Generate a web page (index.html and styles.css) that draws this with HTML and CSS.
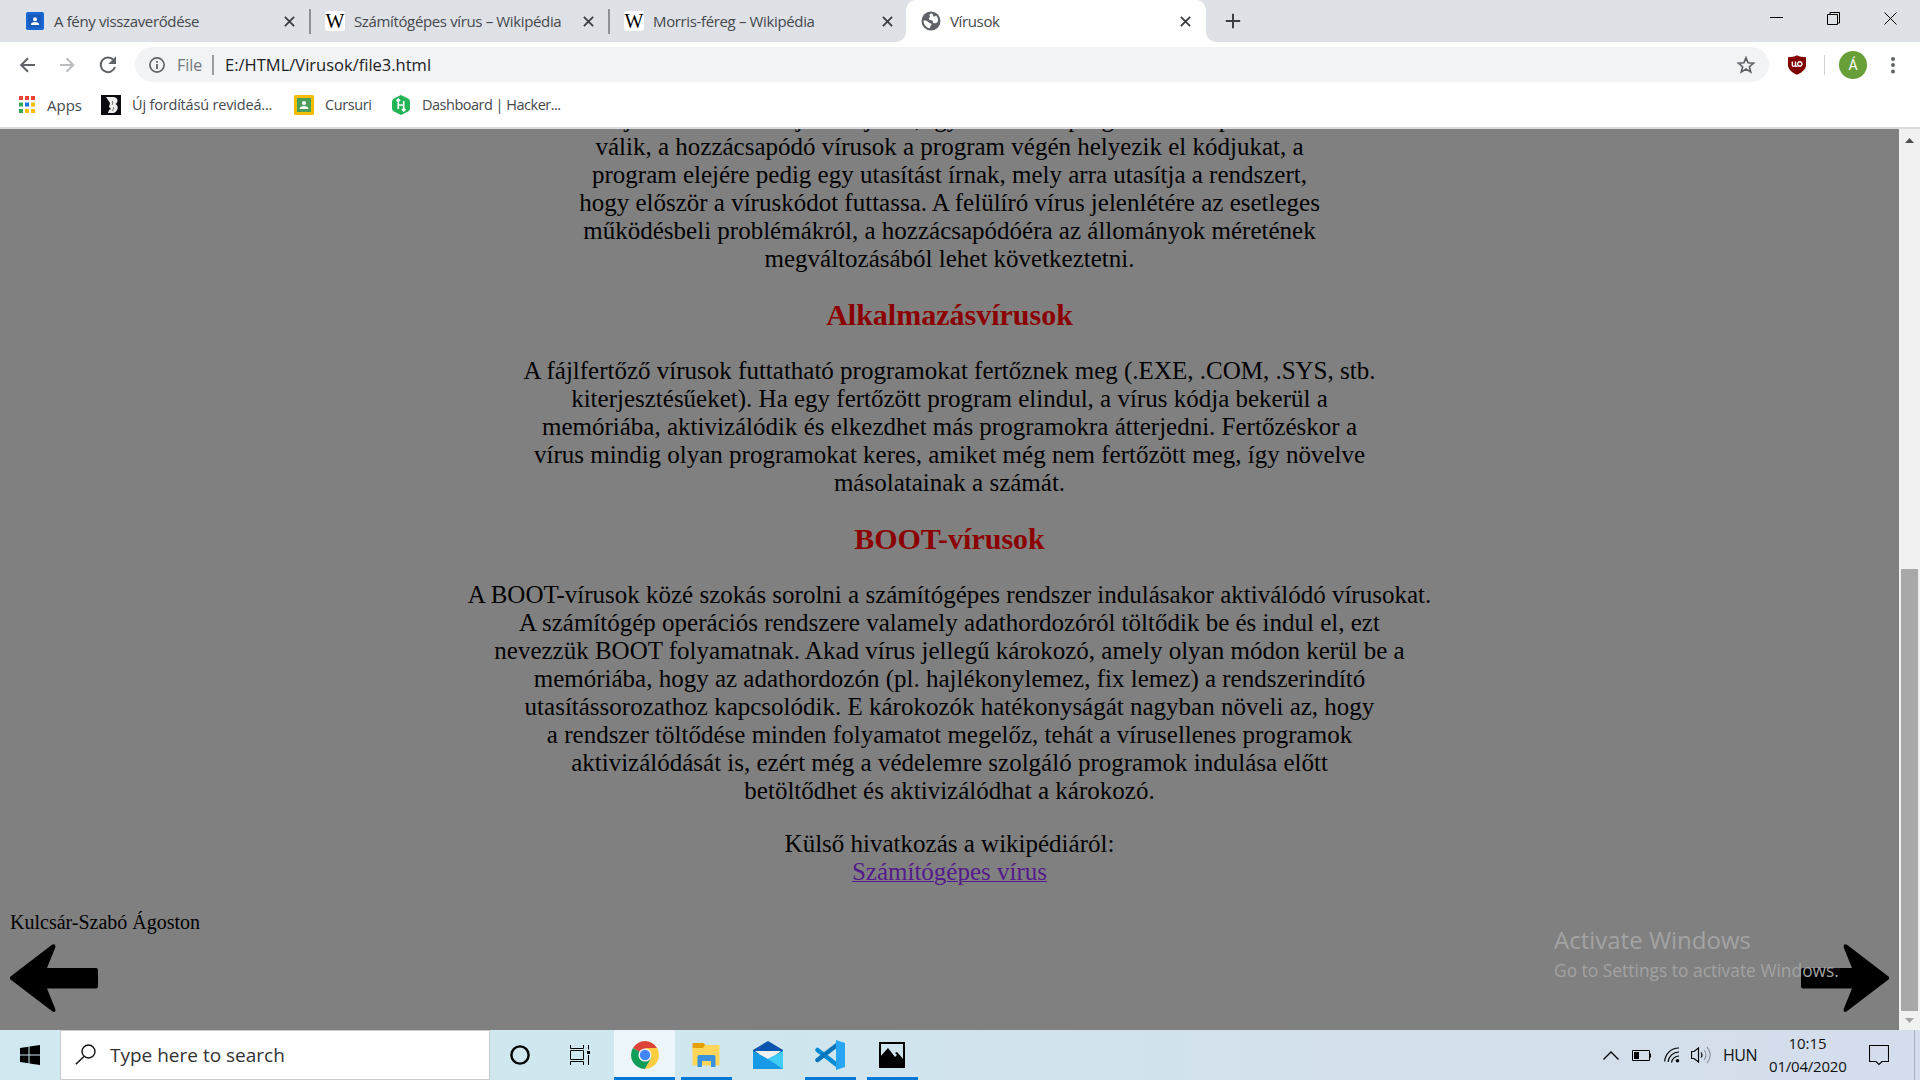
FILE: index.html
```html
<!DOCTYPE html>
<html lang="hu">
<head>
<meta charset="utf-8">
<title>Vírusok</title>
<link rel="stylesheet" href="styles.css">
</head>
<body>
<div class="screen">
  <header class="tabstrip">
    <div class="tab tab-first">
      <svg class="fav" viewBox="0 0 20 20"><rect width="20" height="20" rx="2" fill="#1967d2"/><rect x="3" y="3" width="14" height="14" fill="#185abc"/><circle cx="10" cy="8" r="2.2" fill="#fff"/><path d="M5.500 14.500v-1c0-1.600 2.500-2.500 4.500-2.500s4.500.9 4.500 2.500v1z" fill="#fff"/></svg>
      <span class="tab-title">A fény visszaverődése</span>
      <svg class="close" viewBox="0 0 10 10"><path d="M.8.8l8.400 8.400M9.200.8L.8 9.200"/></svg>
    </div>
    <div class="tab">
      <span class="fav wiki">W</span>
      <span class="tab-title">Számítógépes vírus – Wikipédia</span>
      <svg class="close" viewBox="0 0 10 10"><path d="M.8.8l8.400 8.400M9.200.8L.8 9.200"/></svg>
    </div>
    <div class="tab tab-third">
      <span class="fav wiki">W</span>
      <span class="tab-title">Morris-féreg – Wikipédia</span>
      <svg class="close" viewBox="0 0 10 10"><path d="M.8.8l8.400 8.400M9.200.8L.8 9.200"/></svg>
    </div>
    <div class="tab active">
      <svg class="fav globe" viewBox="0 0 20 20"><circle cx="10" cy="10" r="9.500" fill="#5f6368"/><path d="M11 2.500c-2.500 0-3 1.500-2.300 2.500 1 1.300-1.200 1.700-.8 3 .3 1.200 2.300.8 3.300 1.500 1.300 1 .2 2.500 1.800 2.800 1.800.3 3.500-.3 4-2.300.2-3-1-4.300-2-5.500-.8 1-2 1.600-2.500.8S12.300 3.700 11 2.500zM2.500 9.500c2 0 4 .4 5 1.800s2.500.5 3 1.700c.4 1.300-1.500 1.500-1.500 4.300-3.500-.3-6.500-3.800-6.500-7.800z" fill="#fff"/></svg>
      <span class="tab-title">Vírusok</span>
      <svg class="close" viewBox="0 0 10 10"><path d="M.8.8l8.400 8.400M9.200.8L.8 9.200"/></svg>
    </div>
    <svg class="newtab" viewBox="0 0 16 16"><path d="M8 .8v14.400M.8 8h14.400" stroke="#3c4043" stroke-width="2"/></svg>
    <div class="window-buttons">
      <svg viewBox="0 0 14 14"><path d="M0 5.500h13" /></svg>
      <svg viewBox="0 0 14 14"><path d="M.5 2.500h10v10H.5zM3 2V.5h9.500V11H11"/></svg>
      <svg viewBox="0 0 14 14"><path d="M.5.5l12 12m0-12l-12 12"/></svg>
    </div>
  </header>

  <div class="toolbar">
    <svg class="nav" viewBox="0 0 20 20"><path d="M18 10H4M11 3.200L4.200 10l6.800 6.800" fill="none" stroke="#5f6368" stroke-width="2"/></svg>
    <svg class="nav" viewBox="0 0 20 20"><path d="M3 10h13M9.500 3.200l6.800 6.800-6.800 6.800" fill="none" stroke="#babcbe" stroke-width="2"/></svg>
    <svg class="nav reload" viewBox="0 0 20 20"><path d="M15.700 5.200A7.300 7.300 0 1 0 17 12" fill="none" stroke="#5f6368" stroke-width="2"/><path d="M18 1.300v7.700h-7.700z" fill="#5f6368"/></svg>
    <div class="omnibox">
      <svg class="info" viewBox="0 0 18 18"><circle cx="9" cy="9" r="7.100" fill="none" stroke="#5f6368" stroke-width="1.700"/><path d="M9 8v5M9 4.900v1.900" stroke="#5f6368" stroke-width="1.800"/></svg>
      <span class="scheme">File</span><span class="bar"></span>
      <span class="url">E:/HTML/Virusok/file3.html</span>
      <svg class="star" viewBox="0 0 20 20"><path d="M10 2.800l2.100 5 5.400.4-4.100 3.500 1.300 5.300-4.700-2.900L5.300 17l1.300-5.300-4.100-3.500 5.400-.4z" fill="none" stroke="#5f6368" stroke-width="1.700"/></svg>
    </div>
    <svg class="ublock" viewBox="0 0 20 20"><path d="M10 .3C7.500 1.800 4 2.200 1 2.200V10c0 5 5 7.800 9 9.800 4-2 9-4.800 9-9.800V2.200C16 2.200 12.500 1.800 10 .3z" fill="#800000"/><path d="M5.300 6.500v3.300a1.600 1.600 0 0 0 3.200 0V6.500m0 3.300q0 1.600 2 1.600M10.600 9a2.200 2.200 0 1 0 4.400 0 2.200 2.200 0 1 0-4.400 0" fill="none" stroke="#fff" stroke-width="1.400"/></svg>
    <span class="separator"></span>
    <span class="avatar">Á</span>
    <svg class="menu" viewBox="0 0 6 18"><g fill="#5f6368"><circle cx="3" cy="3" r="2"/><circle cx="3" cy="9" r="2"/><circle cx="3" cy="15.500" r="2"/></g></svg>
  </div>

  <nav class="bookmarks">
    <svg class="apps" viewBox="0 0 17 17"><path d="M0 0h4v4H0zM6 0h4v4H6zM12 0h4v4h-4z" fill="#ea4335"/><path d="M0 6.500h4v4H0zM0 13h4v4H0z" fill="#34a853"/><path d="M6 6.500h4v4H6z" fill="#1a73e8"/><path d="M12 6.500h4v4h-4zM6 13h4v4H6zM12 13h4v4h-4z" fill="#fbbc04"/></svg>
    <span class="bm b1">Apps</span>
    <svg class="bmi" viewBox="0 0 20 20"><path d="M0 0h20v20H0z" fill="#0b0b0f"/><path d="M5 2h7c5 0 6 5 2.500 7 4 2 2 8-2 9H7l1-3 2-1-2-2 1-4-2-3z" fill="#eee"/><path d="M11 6l1 1-1 3M12 12l1 1-2 3" fill="none" stroke="#777"/></svg>
    <span class="bm b2">Új fordítású revideá...</span>
    <svg class="bmi" viewBox="0 0 20 20"><rect y="0" width="20" height="20" rx="1.500" fill="#fbbc04"/><path d="M3 3h14v14H3z" fill="#4b9e58"/><circle cx="10" cy="8" r="2" fill="#fff"/><path d="M5.500 14c0-4 9-4 9 0z" fill="#fff"/></svg>
    <span class="bm b3">Cursuri</span>
    <svg class="bmi" viewBox="0 0 20 20"><path d="M10 0l7 3.500q2 1 2 3v7q0 2-2 3L10 20l-7-3.500q-2-1-2-3v-7q0-2 2-3z" fill="#22b455"/><path d="M7.300 4.500V14M12.700 6v9.500M7.300 10h5.400M5.500 6l1.800-2L9 6m2 8l1.700 2 1.800-2" fill="none" stroke="#fff" stroke-width="1.700"/></svg>
    <span class="bm b4">Dashboard | Hacker...</span>
  </nav>

  <main class="viewport">
    <article class="page">
      <div class="article">
        <p class="para clipped">
          <span class="line">elejére másolva a saját kódjukat, így az eredeti program életképtelenné</span>
          <span class="line">válik, a hozzácsapódó vírusok a program végén helyezik el kódjukat, a</span>
          <span class="line">program elejére pedig egy utasítást írnak, mely arra utasítja a rendszert,</span>
          <span class="line">hogy először a víruskódot futtassa. A felülíró vírus jelenlétére az esetleges</span>
          <span class="line">működésbeli problémákról, a hozzácsapódóéra az állományok méretének</span>
          <span class="line">megváltozásából lehet következtetni.</span>
        </p>
        <h2>Alkalmazásvírusok</h2>
        <p class="para">
          <span class="line">A fájlfertőző vírusok futtatható programokat fertőznek meg (.EXE, .COM, .SYS, stb.</span>
          <span class="line">kiterjesztésűeket). Ha egy fertőzött program elindul, a vírus kódja bekerül a</span>
          <span class="line">memóriába, aktivizálódik és elkezdhet más programokra átterjedni. Fertőzéskor a</span>
          <span class="line">vírus mindig olyan programokat keres, amiket még nem fertőzött meg, így növelve</span>
          <span class="line">másolatainak a számát.</span>
        </p>
        <h2>BOOT-vírusok</h2>
        <p class="para">
          <span class="line">A BOOT-vírusok közé szokás sorolni a számítógépes rendszer indulásakor aktiválódó vírusokat.</span>
          <span class="line">A számítógép operációs rendszere valamely adathordozóról töltődik be és indul el, ezt</span>
          <span class="line">nevezzük BOOT folyamatnak. Akad vírus jellegű károkozó, amely olyan módon kerül be a</span>
          <span class="line">memóriába, hogy az adathordozón (pl. hajlékonylemez, fix lemez) a rendszerindító</span>
          <span class="line">utasítássorozathoz kapcsolódik. E károkozók hatékonyságát nagyban növeli az, hogy</span>
          <span class="line">a rendszer töltődése minden folyamatot megelőz, tehát a vírusellenes programok</span>
          <span class="line">aktivizálódását is, ezért még a védelemre szolgáló programok indulása előtt</span>
          <span class="line">betöltődhet és aktivizálódhat a károkozó.</span>
        </p>
        <p class="para outside">
          <span class="line">Külső hivatkozás a wikipédiáról:</span>
          <span class="line"><a href="#">Számítógépes vírus</a></span>
        </p>
      </div>
      <footer class="author">Kulcsár-Szabó Ágoston</footer>
      <div class="arrows">
        <svg viewBox="0 0 88 68"><path id="arrow" d="M.5 32.500L42 .8Q46 -.8 45.300 3.500L37 24H86q2 0 2 2V42.500q0 2-2 2H37L45.300 65Q46 69 42.500 67.500L.5 35.500Q-.8 34 .5 32.500z"/></svg>
        <svg viewBox="0 0 88 68"><use href="#arrow" transform="translate(88 0) scale(-1 1)"/></svg>
      </div>
    </article>
    <div class="scrollbar">
      <svg viewBox="0 0 9 5"><path d="M0 5h9L4.500 0z" fill="#505050"/></svg>
      <span class="thumb"></span>
      <svg viewBox="0 0 9 5"><path d="M0 0h9L4.500 5z" fill="#a3a3a3"/></svg>
    </div>
    <div class="watermark"><div class="wm1">Activate Windows</div><div class="wm2">Go to Settings to activate Windows.</div></div>
  </main>

  <footer class="taskbar">
    <div class="start"><svg viewBox="0 0 20 20"><path d="M0 3l8.500-1.200v7.700H0zM9.500 1.600L20 0v9.500H9.500zM0 10.500h8.500v7.800L0 17zM9.500 10.500H20V20L9.500 18.500z"/></svg></div>
    <div class="search"><svg viewBox="0 0 21 21"><circle cx="13.500" cy="7.500" r="6.500" fill="none" stroke="#111" stroke-width="1.400"/><path d="M9 12.500L.8 20.300" stroke="#111" stroke-width="1.500"/></svg><span>Type here to search</span></div>
    <div class="task cortana"><svg width="20" height="20" viewBox="0 0 20 20"><circle cx="10" cy="10" r="8.600" fill="none" stroke="#000" stroke-width="2.400"/></svg></div>
    <div class="task view"><svg width="21" height="20" viewBox="0 0 21 20"><path d="M.5 0v3.500h13V0M.5 5.500h13v9H.5zM.5 20v-3.500h13V20M18.500 0v4.500M18.500 10v10" fill="none" stroke="#000"/><path d="M17 6h3v3h-3z"/></svg></div>
    <div class="task chrome"><svg width="28" height="28" viewBox="0 0 28 28"><path d="M14 14L1.900 7A14 14 0 0 1 26.100 7z" fill="#db4437"/><path d="M14 14L1.900 7A14 14 0 0 0 14 28l6-10.500z" fill="#0f9d58"/><path d="M14 7h12.100A14 14 0 0 1 14 28l6-10.500z" fill="#ffcd40"/><circle cx="14" cy="14" r="6.600" fill="#f1f1f1"/><circle cx="14" cy="14" r="5.200" fill="#4285f4"/></svg></div>
    <div class="task run"><svg width="28" height="24" viewBox="0 0 28 24"><path d="M.5 1q0-1 1-1h10l2 2-1 4H.5z" fill="#e5a000"/><path d="M.5 5H11l2-3h14.500v20.500H.5z" fill="#ffd65a"/><path d="M5.500 24V14q0-2 2-2h14q2 0 2 2v10H19v-6h-9v6z" fill="#3a91dc"/></svg></div>
    <div class="task"><svg width="30" height="28" viewBox="0 0 30 28"><path d="M0 9L15 0l15 9v4H0z" fill="#0a55ad"/><path d="M2 10h26L16 20z" fill="#f2f2f2"/><path d="M0 10l15 8L30 10v18H0z" fill="#1899e6"/><path d="M30 10L15 18l15 10z" fill="#40cdf5"/></svg></div>
    <div class="task run"><svg width="30" height="30" viewBox="0 0 30 30"><path d="M2.500 10L22 25" stroke="#008bd2" stroke-width="4.500" stroke-linecap="round"/><path d="M2.500 20L22 5" stroke="#0875bd" stroke-width="4.500" stroke-linecap="round"/><path d="M21 0l9 3v24l-9 3z" fill="#27a5f2"/></svg></div>
    <div class="task run"><svg width="26" height="26" viewBox="0 0 26 26"><path d="M1 1h24v24H1z" fill="none" stroke="#000" stroke-width="2"/><path d="M1 15l8-9 7 9 2-2-2-2 2-1 7 8v7H1z"/></svg></div>
    <div class="tray">
      <svg width="16" height="9" viewBox="0 0 16 9"><path d="M.5 8.500L8 1l7.500 7.500" fill="none" stroke="#000" stroke-width="1.300"/></svg>
      <svg class="batt" width="19" height="11" viewBox="0 0 19 11"><path d="M.5.5h17v10H.5zM18.500 3.500v4" fill="none" stroke="#000"/><path d="M2 2h5v7H2z"/></svg>
      <svg class="wifi" width="16" height="16" viewBox="0 0 16 16"><path d="M.7 14.500A14 14 0 0 1 15 1M4 15A11 11 0 0 1 15 5M7.500 15.500A7.500 7.500 0 0 1 15 9" fill="none" stroke="#000" stroke-width="1.200"/><circle cx="13.500" cy="13.800" r="1.800"/></svg>
      <svg class="sound" width="21" height="18" viewBox="0 0 21 18"><path d="M.5 5.500H3L7.500 2v14L3 12.500H.5zM10 6.500q2 2.500 0 5" fill="none" stroke="#000" stroke-width="1.200"/><path d="M13 4q4 5 0 10M16 1q6.500 8 0 16" fill="none" stroke="#8f98a3" stroke-width="1.200"/></svg>
      <span class="lang">HUN</span>
      <div class="clock"><div>10:15</div><div class="date">01/04/2020</div></div>
      <svg class="note" width="20" height="20" viewBox="0 0 20 20"><path d="M.5.5h19V16.500H13L10 19.500 7 16.500H.5z" fill="none" stroke="#000" stroke-width="1.100"/></svg>
    </div>
  </footer>
</div>
</body>
</html>
```
FILE: styles.css
```css
* { box-sizing: border-box; }
body { margin: 0; overflow: hidden; }
svg { display: block; flex: none; }
.screen { width: 1920px; height: 1080px; display: flex; flex-direction: column; font-family: "Open Sans", "Noto Sans", sans-serif; background: #fff; }

/* tab strip */
.tabstrip { height: 42px; flex: none; background: #dee1e6; display: flex; }
.tab { width: 299px; display: flex; align-items: center; padding: 0 16px 0 14px; position: relative; color: #45494d; }
.tab-first { width: 311px; padding-left: 25px; }
.tab-third { width: 296px; padding-right: 13px; }
.tab:not(.active):not(.tab-third)::after { content: ""; position: absolute; right: 0; top: 9px; width: 2px; height: 25px; background: #8d9196; }
.fav { width: 20px; height: 18px; flex: none; }
.globe { height: 20px; }
.wiki { background: #fff; border-radius: 3px; height: 20px; color: #000; font: 20px/21px "Liberation Serif", serif; text-align: center; }
.tab-title { margin-left: 9px; white-space: nowrap; flex: 1; min-width: 0; font-size: 15px; letter-spacing: -0.36px; padding-bottom: 1px; }
.close { width: 11px; height: 11px; }
.close path { stroke: #3c4043; stroke-width: 1.7; }
.active { width: 300px; background: #fff; border-radius: 10px 10px 0 0; padding: 0 15px 0 15px; }
.active::before, .active::after { content: ""; position: absolute; bottom: 0; width: 10px; height: 10px; }
.active::before { left: -10px; background: radial-gradient(circle at 0 0, transparent 9.5px, #fff 10px); }
.active::after { right: -10px; background: radial-gradient(circle at 100% 0, transparent 9.5px, #fff 10px); }
.newtab { width: 16px; height: 16px; margin: 13px 0 0 19px; }
.window-buttons { margin-left: auto; display: flex; gap: 43px; padding: 12px 22px 0 0; }
.window-buttons svg { width: 14px; height: 14px; }
.window-buttons path { fill: none; stroke: #000; }

/* address row */
.toolbar { height: 44px; flex: none; display: flex; align-items: center; padding: 1px 24px 0 17px; }
.nav { width: 20px; height: 20px; margin-right: 20px; }
.reload { margin: 0 19px 0 1px; }
.omnibox { width: 1634px; height: 43px; max-height: 43px; border-radius: 22px; background: #f1f3f4; display: flex; align-items: center; font-size: 16px; margin-left: -2px; padding: 0 13px 0 13px; white-space: nowrap; color: #202124; height: 35px; }
.info { width: 18px; height: 18px; }
.scheme { color: #73777b; margin-left: 11px; width: 26px; }
.bar { width: 2px; height: 20px; background: #999da1; margin: 0 11px 0 9px; }
.url { font-size: 16.5px; }
.star { width: 20px; height: 20px; margin-left: auto; }
.ublock { width: 20px; height: 20px; margin-left: 18px; }
.separator { width: 1px; height: 20px; background: #cfd1d4; margin: 0 14px 0 17px; }
.avatar { width: 28px; height: 28px; border-radius: 50%; background: #689f38; color: #fff; font: 14px/28px Roboto, sans-serif; text-align: center; }
.menu { width: 6px; height: 18px; margin-left: auto; }

/* bookmarks */
.bookmarks { height: 43px; flex: none; display: flex; align-items: center; padding: 0 19px 4px; border-bottom: 2px solid #d9dbdf; color: #45494d; white-space: nowrap; }
.apps { width: 17px; height: 17px; }
.bm { margin-left: 11px; font-size: 14.5px; flex: none; }
.bmi { width: 20px; height: 20px; }
.b1 { width: 54px; font-size: 15px; }
.b2 { width: 162px; letter-spacing: -0.18px; }
.b3 { width: 66px; letter-spacing: -0.4px; }
.b4 { letter-spacing: -0.5px; }

/* document */
.viewport { flex: 1; min-height: 0; display: flex; position: relative; background: #808080; overflow: hidden; }
.page { width: 1899px; padding: 0 10px; font-family: "Liberation Serif", serif; color: #000; }
.article { text-align: center; font-size: 25px; line-height: 28px; }
.para { margin: 0; }
.clipped { margin-top: -24px; }
.line { display: block; white-space: nowrap; }
h2 { margin: 28px 0; font-size: 30px; line-height: 28px; color: #8b0000; }
.outside { margin-top: 25px; }
.article a { color: #551a8b; text-decoration-thickness: 1px; }
.author { font-size: 20px; line-height: 22px; margin-top: 25px; }
.arrows { display: flex; justify-content: space-between; margin-top: 11px; }
.arrows svg { width: 88px; height: 68px; }
.scrollbar { width: 21px; background: #f1f1f1; display: flex; flex-direction: column; align-items: center; padding: 9px 0 7px; }
.scrollbar svg { width: 9px; height: 5px; }
.thumb { width: 17px; height: 442px; margin: auto 0 7px; background: #a8a8a8; }
.watermark { position: absolute; left: 1554px; top: 795px; color: #a3a3a3; white-space: nowrap; }
.wm1 { font-size: 24px; line-height: 32px; }
.wm2 { font-size: 17.4px; line-height: 28px; }

/* taskbar */
.taskbar { height: 50px; flex: none; display: flex; background: linear-gradient(90deg, #d0e8f0 0, #cfe7ef 35%, #d3e0ec 70%, #d4ddeb 100%); }
.start { width: 60px; display: grid; place-items: center; }
.start svg { width: 20px; height: 20px; }
.search { width: 430px; background: #fff; border: 1px solid #c8cccf; display: flex; align-items: center; padding-left: 14px; font-size: 19px; color: #333; }
.search svg { width: 21px; height: 21px; margin: 0 14px 2px 0; }
.task { width: 62px; display: grid; place-items: center; position: relative; }
.cortana { width: 60px; }
.view { width: 64px; padding-right: 4px; }
.chrome { width: 61px; background: #ecf5f9; border-bottom: 3px solid #0078d7; padding-top: 2px; }
.run::after { content: ""; position: absolute; left: 6px; right: 5px; bottom: 0; height: 3px; background: #0078d7; }
.tray { margin: 0 5px 0 auto; display: flex; align-items: center; border-right: 1px solid #a8b2c0; color: #111; font-size: 16px; }
.batt { margin-left: 13px; }
.wifi { margin-left: 13px; }
.sound { margin-left: 11px; }
.lang { margin-left: 11px; width: 31px; letter-spacing: -0.5px; }
.clock { width: 77px; margin-left: 15px; text-align: center; line-height: 23px; font-size: 15px; }
.date { letter-spacing: -0.2px; }
.note { margin: 0 25px 0 23px; }
```
